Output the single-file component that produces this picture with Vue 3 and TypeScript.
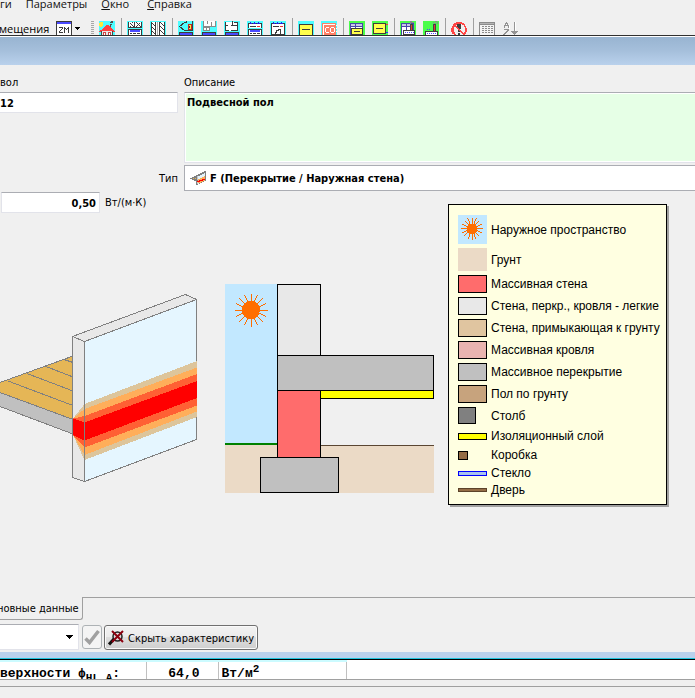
<script setup lang="ts">
import { ref } from 'vue'

interface Shape {
  d: string
  fill?: string
  stroke?: string
}
interface Tool {
  name: string
  shapes: Shape[]
}
interface LegendItem {
  label: string
  kind: string
}

const cyan: Shape = { d: 'M0 0h16v14H0z', fill: '#4dfdff' }
const green: Shape = { d: 'M0 0h16v14H0z', fill: '#4bfd4b' }
const miniWindow: Shape[] = [
  { d: 'M1 11h14v3H1z', fill: '#3c3c3c' },
  { d: 'M2 12h12v2H2z', fill: '#4a4aff' },
]
const tableTop: Shape[] = [
  { d: 'M1 2h13v12H1z', fill: '#4747a8' },
  { d: 'M2 3h4v2H2zM7 3h6v2H7z', fill: '#c8c8e8' },
  { d: 'M2 6h4v8H2zM7 6h6v8H7z', fill: '#fff' },
]
const notepad: Shape[] = [
  { d: 'M1.5 2.5h13v11h-13z', fill: '#fff', stroke: '#3c3c3c' },
  { d: 'M3 1h1v1h1v1h1V2h1V1h1v1h1v1h1V2h1V1h1v1h1v1H3z', fill: '#2424e0' },
  { d: 'M3 5h6v1H3z', fill: '#3c3c3c' },
  { d: 'M10 5h3v1h-3z', fill: '#e33' },
]

const toolGroups: Tool[][] = [
  [
    {
      name: 'Здание',
      shapes: [
        cyan,
        { d: 'M1 1h3v1H1zM0 2h4v3H0zM1 5h2v1H1z', fill: '#ffe93b' },
        { d: 'M11 1h2v1h-2zM12 0h2v2h-2zM11 3h2v1h-2zM11 4h1v2h-1z', fill: '#505050' },
        { d: 'M7 4h3v1h1v1h1v1h1v1h1v1h1v1h1v1H0v-1h1V9h2V8h1V7h1V6h1V5h1z', fill: '#ff4040' },
        { d: 'M2 10h12v4H2z', fill: '#484848' },
        { d: 'M3 10h10v4H3z', fill: '#e8e8e8' },
        { d: 'M4 11h3v3H4zM9 11h3v3H9z', fill: '#d04444' },
        { d: 'M5 12h1v2H5zM10 12h1v2h-1z', fill: '#fff' },
      ],
    },
  ],
  [
    {
      name: 'Горизонтальные перегородки',
      shapes: [
        cyan,
        { d: 'M1 1h14v6H1z', fill: '#fff' },
        { d: 'M1.5 1v6M3.5 2v1M4.5 3v1M5.5 4v1M6.5 5v1M3.5 5v1M5.5 1v1M7.5 1v6M9.5 1v1M10.5 2v1M11.5 3v1M12.5 4v1M13.5 5v1M9.5 5v1M10.5 4v1M12.5 2v1M14.5 1v6M1 6.5h14', stroke: '#3c3c3c' },
        { d: 'M1.5 8.5h13v6h-13z', fill: '#fff', stroke: '#3c3c3c' },
        { d: 'M3 9h10v2H3z', fill: '#4a4aff' },
        { d: 'M3 12h2v1H3zM6 12h3v1H6zM10 12h3v1h-3z', fill: '#3c3c3c' },
      ],
    },
    {
      name: 'Вертикальные перегородки',
      shapes: [
        cyan,
        { d: 'M1 1h14v13H1z', fill: '#fff' },
        { d: 'M1.5 1v13M5.5 1v13M9.5 1v13M14.5 1v13M2 2.5h1M3 3.5h1M4 4.5h1M2 6.5h1M3 7.5h1M4 8.5h1M2 10.5h1M3 11.5h1M4 12.5h1M10 1.5h1M11 2.5h1M12 3.5h1M13 4.5h1M10 5.5h1M11 6.5h1M12 7.5h1M13 8.5h1M10 9.5h1M11 10.5h1M12 11.5h1M13 12.5h1', stroke: '#3c3c3c' },
        { d: 'M7.5 1v13', stroke: '#aaa' },
      ],
    },
  ],
  [
    {
      name: 'Помещение',
      shapes: [
        cyan,
        { d: 'M14.5 0v9.5h-8l-5-4l5-4h2V0', stroke: '#3c3c3c' },
        { d: 'M10 3h4v6h-4z', fill: '#c22626' },
        { d: 'M11 4h2v4h-2z', fill: '#ffe93b' },
        { d: 'M11 5h1v2h-1z', fill: '#3c3c3c' },
        ...miniWindow,
      ],
    },
    {
      name: 'Группа помещений',
      shapes: [
        cyan,
        { d: 'M2 0h12v6H2z', fill: '#fff' },
        { d: 'M4 6h4v4H2V7h2z', fill: '#fff' },
        { d: 'M2.5 0v5.5h12V0M6.5 0v3M8.5 5v4.5h-6v-3h6M5.5 6v3M10.5 1v4', stroke: '#8a8a8a' },
        ...miniWindow,
      ],
    },
    {
      name: 'Этаж',
      shapes: [
        cyan,
        { d: 'M1 1h13v9H1z', fill: '#fff' },
        { d: 'M1.5 1v8.5h3M7 9.5h6.5V1H10M8.5 0v4M1 4.5h3M7 4.5h6.5', stroke: '#3c3c3c' },
        ...miniWindow,
      ],
    },
    {
      name: 'Список помещений',
      shapes: [
        cyan,
        ...notepad,
        { d: 'M0 7h16v1H0z', fill: '#4dfdff' },
        { d: 'M1.5 8.5h13v6h-13z', fill: '#fff', stroke: '#3c3c3c' },
        { d: 'M3 9h10v2H3z', fill: '#4a4aff' },
        { d: 'M3 12h2v1H3zM6 12h3v1H6zM10 12h3v1h-3z', fill: '#3c3c3c' },
      ],
    },
    {
      name: 'График',
      shapes: [
        cyan,
        ...notepad,
        { d: 'M5.5 14v-2.5h1v-2h2v-1h2V14M3 13.5h3', stroke: '#3c3c3c' },
      ],
    },
  ],
  [
    {
      name: 'Ограждение',
      shapes: [
        cyan,
        { d: 'M1.5 3.5h13v11h-13z', fill: '#ffff4d', stroke: '#3c3c3c' },
        { d: 'M4 8h8v1H4z', fill: '#3c3c3c' },
      ],
    },
    {
      name: 'CO',
      shapes: [
        cyan,
        { d: 'M1 2h14v12H1z', fill: '#ff8066' },
        { d: 'M2.5 14V3.5H14', stroke: '#fff' },
        { d: 'M5 6h3v1H5v4h3v1H5v-1H4V7h1zM10 6h3v1h-3zM9 7h1v4H9zM10 11h3v1h-3zM13 7h1v4h-1zM15 4h1v1h-1zM15 7h1v1h-1zM15 10h1v1h-1z', fill: '#fff' },
      ],
    },
  ],
  [
    {
      name: 'Таблица ограждений',
      shapes: [
        green,
        ...tableTop,
        { d: 'M2.5 7.5h11v6h-11z', fill: '#ffff4d', stroke: '#3c3c3c' },
        { d: 'M5 10h6v1H5z', fill: '#3c3c3c' },
      ],
    },
    {
      name: 'Параметры ограждения',
      shapes: [
        green,
        { d: 'M1.5 2.5h12v10h-12z', fill: '#ffff4d', stroke: '#3c3c3c' },
        { d: 'M4 7h7v1H4z', fill: '#3c3c3c' },
        { d: 'M14 3h2v1h-2z', fill: '#f33' },
        { d: 'M14 11h2v1h-2z', fill: '#33f' },
      ],
    },
  ],
  [
    {
      name: 'Таблица источников',
      shapes: [
        green,
        ...tableTop,
        { d: 'M10 3h3v6h-3z', fill: '#444' },
        { d: 'M11 4h1v5h-1z', fill: '#e33' },
        { d: 'M10 0h2v1h2v1h-3v1h-1z', fill: '#888' },
        { d: 'M3.5 9.5h11v4h-11z', fill: '#fff', stroke: '#3c3c3c' },
        { d: 'M5 11h1v1H5zM7 11h1v1H7zM9 11h1v1H9zM11 11h1v1h-1zM13 11h1v1h-1z', fill: '#4a4aff' },
      ],
    },
    {
      name: 'Источник тепла',
      shapes: [
        green,
        { d: 'M10 3h3v7h-3z', fill: '#444' },
        { d: 'M11 4h1v6h-1z', fill: '#e33' },
        { d: 'M10 1h1v1h-1zM12 0h2v1h-2zM11 2h2v1h-2zM14 1h1v2h-1z', fill: '#888' },
        { d: 'M2.5 10.5h12v4h-12z', fill: '#fff', stroke: '#3c3c3c' },
        { d: 'M4 12h1v1H4zM6 12h1v1H6zM8 12h1v1H8zM10 12h1v1h-1zM12 12h1v1h-1zM4 8h1v1H4zM6 8h1v1H6z', fill: '#4a4aff' },
      ],
    },
  ],
  [
    {
      name: 'Ошибки',
      shapes: [
        { d: 'M6 3h4v5H9v3H7V8H6zM7 12h2v2H7z', fill: '#3c3c3c' },
        { d: 'M5 1h6v1h2v1h1v2h1v2h1v4h-1v2h-1v1h-2v-1h1v-2h1V6h-1V4h-2V3H6v1H4v2H3v5h1v2h1v1H3v-1H1v-2H0V7h1V5h1V3h1V2h2z', fill: '#ff4545' },
        { d: 'M3 4h2v1h1v1h1v1h1v1h1v1h1v1h1v1h1v1h1v1h-2v-1h-1v-1H9v-1H8V9H7V8H6V7H5V6H4V5H3z', fill: '#ff4545' },
      ],
    },
  ],
  [
    {
      name: 'Календарь',
      shapes: [
        { d: 'M0 1h16v13H0z', fill: '#8c8c8c' },
        { d: 'M1 4h14v10H1z', fill: '#f4f4f4' },
        { d: 'M1 2h14v1H1z', fill: '#b4b4b4' },
        { d: 'M3 5h2v1H3zM6 5h2v1H6zM9 5h2v1H9zM12 5h2v1h-2zM3 7h2v1H3zM6 7h2v1H6zM9 7h2v1H9zM12 7h2v1h-2zM3 9h2v1H3zM6 9h2v1H6zM9 9h2v1H9zM12 9h2v1h-2zM3 11h2v1H3zM6 11h2v1H6zM9 11h2v1H9zM12 11h2v1h-2z', fill: '#8c8c8c' },
      ],
    },
    {
      name: 'Сортировка',
      shapes: [
        { d: 'M4 1h1v1h1v2h1v3H6V5H3v2H2V4h1V2h1zM2 8h5v2H6v1H5v1H4v1H3v1H1v-1h1v-1h1v-1h1v-1h1V9H2zM12 1h1v9h3v1h-1v1h-1v1h-1v1h-1v-1h-1v-1h-1v-1H9v-1h3z', fill: '#949494' },
        { d: 'M4 3h1v1H4zM13 1h1v9h-1zM7 4h1v4H7z', fill: '#fff' },
      ],
    },
  ],
]

const legend: LegendItem[] = [
  { label: 'Наружное пространство', kind: 'outdoor' },
  { label: 'Грунт', kind: 'soil' },
  { label: 'Массивная стена', kind: 'massive-wall' },
  { label: 'Стена, перкр., кровля - легкие', kind: 'light' },
  { label: 'Стена, примыкающая к грунту', kind: 'ground-wall' },
  { label: 'Массивная кровля', kind: 'roof' },
  { label: 'Массивное перекрытие', kind: 'slab' },
  { label: 'Пол по грунту', kind: 'ground-floor' },
  { label: 'Столб', kind: 'column' },
  { label: 'Изоляционный слой', kind: 'insulation' },
  { label: 'Коробка', kind: 'frame' },
  { label: 'Стекло', kind: 'glass' },
  { label: 'Дверь', kind: 'door' },
]

const rays = Array.from({ length: 16 }, (_, i) => (i * 360) / 16)

const symbolCode = ref('12')
const description = ref('Подвесной пол')
const bridgeType = ref('F')
const psi = ref('0,50')
const variant = ref('')
</script>

<template>
  <div class="window">
    <nav class="menu">
      <a href="#">ги</a>
      <a href="#">Параметры</a>
      <a href="#"><u>О</u>кно</a>
      <a href="#"><u>С</u>правка</a>
    </nav>

    <div class="toolbar">
      <span class="toolbar-label">мещения</span>
      <button class="zm" type="button" aria-label="ZM">
        <svg width="25" height="14" viewBox="0 0 25 14" shape-rendering="crispEdges">
          <path d="M.5 .5h15v14H.5z" fill="#fff" stroke="#3c3c3c" />
          <path d="M1 1h14v2H1z" fill="#4a4aff" />
          <path d="M3 6.5h4M6.500 7v1M5.500 8v1M4.500 9v1M3.500 10v1M3 11.500h4M8.500 12V6M9.500 7v1M10.500 8v1M11.500 7v1M12.500 6v6" fill="none" stroke="#3c3c3c" />
          <path d="M19 6h5v1h-1v1h-1v1h-1V8h-1V7h-1z" fill="#000" />
        </svg>
      </button>
      <span class="grip"></span>
      <div v-for="(group, g) in toolGroups" :key="g" class="group">
        <button v-for="tool in group" :key="tool.name" type="button" :aria-label="tool.name">
          <svg width="16" height="14" viewBox="0 0 16 14" shape-rendering="crispEdges">
            <path
              v-for="(s, i) in tool.shapes"
              :key="i"
              :d="s.d"
              :fill="s.fill ?? 'none'"
              :stroke="s.stroke ?? 'none'"
            />
          </svg>
        </button>
      </div>
    </div>

    <div class="caption"></div>

    <form class="form" @submit.prevent>
      <label class="symbol-label" for="symbol">вол</label>
      <label for="description">Описание</label>
      <input id="symbol" v-model="symbolCode" class="field" type="text" />
      <textarea id="description" v-model="description" class="field"></textarea>
      <label class="type-label" for="type">Тип</label>
      <div class="type-box">
        <svg width="16" height="14" viewBox="0 0 16 14" shape-rendering="crispEdges">
          <path d="M0 7h2V6h2V5h3v6H6v-1H4V9H2V8H0z" fill="#808080" />
          <path d="M3 7h1v1H3zM5 7h1v1H5z" fill="#e5b656" />
          <path d="M6 4h2V3h2V2h2V1h2V0h2v10h-2v1h-2v1h-2v1H8v1H6z" fill="#808080" />
          <path d="M8 5h2V4h2V3h2V2h1v8h-2v1h-2v1H9v1H8z" fill="#e2f4fc" />
          <path d="M8 8h2V7h2V6h2V5h1v5h-2v1h-2v1H8z" fill="#ffae5a" />
          <path d="M7 10h2V9h3V8h3v1h-2v1h-3v1H7z" fill="#f00" />
          <path d="M7 5h1v4H7zM7 11h1v2H7z" fill="#c8c8c8" />
        </svg>
        <select id="type" v-model="bridgeType">
          <option value="F">F (Перекрытие / Наружная стена)</option>
        </select>
      </div>
    </form>

    <main class="stage">
      <div class="views">
        <div class="psi">
          <input id="psi" v-model="psi" class="field" type="text" />
          <label for="psi">Вт/(м·К)</label>
        </div>
        <div class="drawings">
          <svg class="iso" width="198" height="194" viewBox="0 290 198 194" shape-rendering="crispEdges">
            <path d="M0 382.500L73 356V420L0 392.500z" fill="#e5b656" />
            <path d="M0 392.500L73 419.500V434L0 406.500z" fill="#c0c0c0" />
            <path d="M0 382.500L73 356M0 392.500L73 419.500M0 406.500L73 434M8 381L73 405.500M27 373.500L73 391M46 366.500L73 377M64 359.500L73 362.500" fill="none" stroke="#808080" />
            <path d="M72.500 336.500L185.500 294.500L196.500 299.500V439.500L84.500 481.500L72.500 477.500z" fill="#e8e8e8" />
            <path d="M84.500 341.500L196.500 299.500V439.500L84.500 481.500z" fill="#e5f6ff" />
            <path d="M73 418.500L84.500 404L197 361V417L84.500 460L73 435z" fill="#ddc59b" />
            <path d="M73 418.500L84.500 409L197 367.500V411.500L84.500 455L73 435z" fill="#ffae5a" />
            <path d="M73 418.500L84.500 416L197 374V405.500L84.500 447.500L73 435z" fill="#ff6034" />
            <path d="M73 418.500L84.500 422.500L197 381V398L84.500 440.500L73 435z" fill="#f00" />
            <path d="M196.500 361V299.500L185.500 294.500L72.500 336.500V477.500L84.500 481.500L196.500 439.500V417M72.500 336.500L84.500 341.500L196.500 299.500M84.500 341.500V481.500" fill="none" stroke="#808080" />
          </svg>
          <svg class="section" width="209" height="209" viewBox="225 284 209 209" shape-rendering="crispEdges">
            <path d="M225 284h52v159h-52z" fill="#c2e8ff" />
            <path d="M225 445h209v48H225z" fill="#ebdac6" />
            <path d="M225 443h52v2h-52z" fill="#008000" />
            <path d="M321 445.500h113" stroke="#5a4632" />
            <g stroke="#ff6e00" fill="#ff6e00">
              <circle cx="251" cy="310" r="8.500" />
              <path v-for="r in rays" :key="r" d="M251 310.500v-17" :transform="`rotate(${r} 251 310)`" />
            </g>
            <g stroke="#000">
              <path d="M277.500 284.500h43v71h-43z" fill="#e8e8e8" />
              <path d="M320.500 390.500h113v8h-113z" fill="#ff0" />
              <path d="M277.500 390.500h43v67h-43z" fill="#ff6c6c" />
              <path d="M277.500 355.500h156v35h-156z" fill="#c0c0c0" />
              <path d="M260.500 457.500h78v35h-78z" fill="#c0c0c0" />
            </g>
          </svg>
        </div>
      </div>

      <ul class="legend">
        <li v-for="item in legend" :key="item.kind" :class="item.kind">
          <span class="swatch">
            <svg v-if="item.kind === 'outdoor'" width="29" height="29" viewBox="0 0 29 29">
              <g stroke="#ff6e00" fill="#ff6e00" shape-rendering="crispEdges">
                <circle cx="14" cy="14" r="5" />
                <path v-for="r in rays" :key="r" d="M14 13.500v-11" :transform="`rotate(${r} 14 13.500)`" />
              </g>
            </svg>
          </span>
          <span>{{ item.label }}</span>
        </li>
      </ul>
    </main>

    <div class="tabs">
      <button type="button" class="tab">новные данные</button>
      <div class="tab-rest"></div>
    </div>

    <div class="actions">
      <div class="variant">
        <select v-model="variant" aria-label="Вариант">
          <option value=""></option>
        </select>
        <svg width="7" height="4" viewBox="0 0 7 4" shape-rendering="crispEdges">
          <path d="M0 0h7v1H6v1H5v1H4v1H3V3H2V2H1V1H0z" fill="#000" />
        </svg>
      </div>
      <button type="button" class="apply" disabled aria-label="Применить">
        <svg width="16" height="16" viewBox="0 0 16 16">
          <path d="M1.500 9.500L5.500 13.500L14.500 2" fill="none" stroke="#a0a0a0" stroke-width="3.500" />
        </svg>
      </button>
      <button type="button" class="hide">
        <svg width="16" height="16" viewBox="0 0 16 16">
          <circle cx="9.500" cy="6.500" r="4.500" fill="#ddd" stroke="#222" stroke-width="1.500" />
          <path d="M6 9L1 14.500" stroke="#111" stroke-width="3" />
          <path d="M4 1L15 12M15 1L4 12" stroke="#8c0010" stroke-width="2" />
        </svg>
        <span>Скрыть характеристику</span>
      </button>
    </div>

    <div class="frame-edge"></div>
    <div class="sheet">
      <table>
        <tbody>
          <tr>
            <td class="name"><div>верхности ϕ<sub>HL,A</sub>:</div></td>
            <td class="value"><div>64,0</div></td>
            <td class="unit"><div>Вт/м<sup>2</sup></div></td>
          </tr>
        </tbody>
      </table>
    </div>
    <div class="status"></div>
  </div>
</template>

<style>
body {
  background: #f0f0f0;
  overflow: hidden;
}
</style>

<style scoped>
.window {
  display: flex;
  flex-direction: column;
  min-height: 100vh;
  overflow: hidden;
  background: #f0f0f0;
  color: #000;
  font: 11px/16px "DejaVu Sans Condensed", "DejaVu Sans", sans-serif;
}
* {
  box-sizing: border-box;
}
svg {
  display: block;
  flex: none;
}
button,
input,
select,
textarea {
  margin: 0;
  font: inherit;
  color: inherit;
}
.menu {
  display: flex;
  gap: 14px;
  height: 18px;
  font: 11px/16px "Open Sans", sans-serif;
}
.menu a {
  margin-top: -4px;
  color: #111;
  text-decoration: none;
}
.menu a:last-child {
  margin-left: 4px;
}
.toolbar {
  display: flex;
  height: 17px;
  padding-top: 3px;
  overflow: hidden;
  font: 11px/16px "Open Sans", sans-serif;
}
.toolbar button {
  display: block;
  padding: 0;
  border: 0;
  background: none;
}
.toolbar-label {
  flex: none;
  width: 57px;
  margin-left: -1px;
}
.zm {
  flex: none;
}
.grip {
  flex: none;
  width: 3px;
  margin-left: 10px;
  background: repeating-linear-gradient(#a8a8a8 0 1px, #f0f0f0 1px 2px);
}
.group {
  display: flex;
  flex: none;
  gap: 7px;
  margin-top: -3px;
  padding: 3px 6px 0 5px;
  border-right: 1px solid #a0a0a0;
}
.group:last-child {
  border-right: 0;
}
.caption {
  height: 30px;
  border-top: 1px solid #303030;
  background: linear-gradient(#fff 0 1px, #98b4d1 1px, #a5bfdb 50%, #b9d1ec);
}
.form {
  display: grid;
  grid-template-columns: 178px 1fr;
  column-gap: 6px;
  padding-top: 10px;
}
.form label {
  height: 17px;
}
.field {
  border: 1px solid #e2e3ea;
  border-top-color: #abadb3;
  background: #fff;
  font-weight: bold;
  outline: 0;
}
.form .field {
  align-self: start;
  min-width: 0;
}
#symbol {
  height: 21px;
  padding: 1px 1px 0 0;
  border-left: 0;
}
#description {
  display: block;
  height: 71px;
  padding: 2px 2px 1px;
  border-right: 0;
  background: #e6ffe6;
  box-shadow: inset 1px 1px #fff, inset 0 -1px #fff;
  resize: none;
}
.form .type-label {
  align-self: center;
  margin-top: 4px;
  justify-self: end;
}
.type-box {
  display: flex;
  align-items: center;
  gap: 1px;
  height: 26px;
  margin-top: 2px;
  padding-left: 5px;
  border: 1px solid #abadb3;
  border-right: 0;
  background: #fff;
}
.type-box select {
  flex: 1;
  height: 24px;
  padding: 1px 3px 0;
  border: 0;
  appearance: none;
  background: transparent;
  font-weight: bold;
}
.stage {
  display: flex;
  flex: 1;
  align-items: flex-start;
}
.views {
  flex: none;
  padding-right: 14px;
}
.psi {
  display: flex;
  align-items: center;
  gap: 5px;
  padding: 1px 0 0 1px;
}
.psi .field {
  width: 99px;
  height: 21px;
  padding: 1px 3px 0;
  text-align: right;
}
.drawings {
  display: flex;
  gap: 27px;
  padding-top: 71px;
}
.iso {
  margin-top: 6px;
}
.legend {
  flex: none;
  margin: 13px 0 0;
  padding: 8px 6px 6px 9px;
  border: 1px solid #000;
  background: #ffffe1;
  box-shadow: 2px 2px #a0a0a0;
  font: 12px/16px "Liberation Sans", Arial, sans-serif;
  list-style: none;
}
.legend li {
  display: grid;
  grid-template-columns: 29px auto;
  column-gap: 4px;
  align-items: center;
  height: 22px;
  white-space: nowrap;
}
.swatch {
  height: 18px;
  border: 1px solid #000;
}
.legend .outdoor {
  height: 33px;
}
.outdoor .swatch {
  height: 29px;
  border: 0;
  background: #c2e8ff;
}
.legend .soil {
  height: 27px;
}
.soil .swatch {
  height: 23px;
  border: 0;
  background: #ebdac6;
}
.massive-wall .swatch {
  background: #ff6c6c;
}
.light .swatch {
  background: #e8e8e8;
}
.ground-wall .swatch {
  background: #e0c5a0;
}
.roof .swatch {
  background: #e9b3b0;
}
.slab .swatch {
  background: #c0c0c0;
}
.ground-floor .swatch {
  background: #c7a37d;
}
.legend .column {
  height: 21px;
}
.column .swatch {
  width: 18px;
  height: 17px;
  background: #808080;
}
.legend .insulation {
  height: 20px;
}
.insulation .swatch {
  height: 7px;
  background: #ff0;
}
.legend .frame,
.legend .glass {
  height: 18px;
}
.frame .swatch {
  width: 10px;
  height: 9px;
  background: #946c45;
}
.glass .swatch {
  height: 5px;
  border-color: #00f;
  background: #a9c4ee;
}
.legend .door {
  height: 16px;
}
.door .swatch {
  height: 4px;
  border-color: #5c4329;
  background: #946c45;
}
.tabs {
  display: flex;
}
.tab {
  flex: none;
  height: 23px;
  margin-left: -3px;
  padding: 2px 3px 0 0;
  border: solid #a0a0a0;
  border-width: 0 1px 1px 0;
  border-radius: 0 0 3px 0;
  background: #f0f0f0;
}
.tab-rest {
  flex: 1;
  border-top: 1px solid #a0a0a0;
}
.actions {
  display: flex;
  align-items: flex-end;
  padding: 4px 0 2px;
}
.variant {
  display: flex;
  align-items: center;
  width: 79px;
  height: 26px;
  padding-right: 5px;
  border: 1px solid #e2e3ea;
  border-top-color: #abadb3;
  border-left: 0;
  background: #fff;
}
.variant select {
  flex: 1;
  min-width: 0;
  height: 24px;
  border: 0;
  appearance: none;
  background: transparent;
}
.apply {
  width: 20px;
  height: 24px;
  margin: 0 2px 1px 3px;
  padding: 0 1px;
  border: 1px solid #adb2b5;
  border-radius: 3px;
  background: #f4f4f4;
}
.hide {
  display: flex;
  align-items: center;
  gap: 4px;
  height: 25px;
  padding: 0 3px;
  border: 1px solid #707070;
  border-radius: 3px;
  background: linear-gradient(#f2f2f2, #ebebeb 50%, #ddd 50%, #cfcfcf);
  box-shadow: inset 0 0 0 1px #fafafa;
  white-space: nowrap;
}
.hide span {
  padding-top: 2px;
}
.frame-edge {
  height: 8px;
  border-bottom: 1px solid #000;
  background: linear-gradient(#b9d1ec 0 6px, #1fc3dc 6px);
}
.sheet {
  height: 20px;
  overflow: hidden;
  border-bottom: 1px solid #a0a0a0;
  background: #fff;
}
table {
  border-collapse: collapse;
  border-top: 2px solid #ccfbff;
  font: bold 13px/24px "Liberation Mono", monospace;
}
td {
  padding: 0;
  border-top: 1px solid #c0c0c0;
  border-right: 1px solid #c0c0c0;
}
td div {
  height: 17px;
  overflow: hidden;
  white-space: nowrap;
}
.name {
  width: 146px;
}
.value {
  width: 72px;
  padding-right: 18px;
  text-align: right;
}
.unit {
  width: 128px;
  padding-left: 3px;
}
sub,
sup {
  font-size: 11px;
  line-height: 0;
}
.status {
  height: 18px;
  background: linear-gradient(#f0f0f0 0 6px, #a0a0a0 6px 7px, #f0f0f0 7px);
}
</style>
